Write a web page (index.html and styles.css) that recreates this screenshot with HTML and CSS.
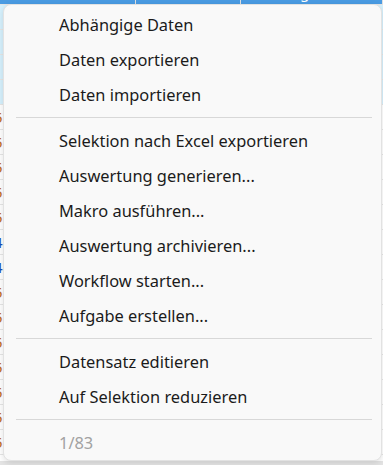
FILE: index.html
```html
<!DOCTYPE html>
<html lang="de">
<head>
    <meta charset="UTF-8">
    <meta name="viewport" content="width=device-width, initial-scale=1.0">
    <title>Kontextmenü</title>
    <link rel="stylesheet" href="styles.css">
</head>
<body>
    <div class="sheet">
        <div class="row selected">
            <div class="cell c1">3</div>
            <div class="cell c2">1000</div>
            <div class="cell c3">Monatsgehälter</div>
        </div>
        <div class="row marked"><div class="cell c1"></div></div>
        <div class="row marked"><div class="cell c1"></div></div>
        <div class="row marked"><div class="cell c1"></div></div>
        <div class="row marked"><div class="cell c1"></div></div>
        <div class="row"><div class="cell c1 num">5</div></div>
        <div class="row"><div class="cell c1 num">5</div></div>
        <div class="row"><div class="cell c1 num">5</div></div>
        <div class="row"><div class="cell c1 num">5</div></div>
        <div class="row"><div class="cell c1 num">5</div></div>
        <div class="row"><div class="cell c1 blue">4</div></div>
        <div class="row"><div class="cell c1 blue">4</div></div>
        <div class="row"><div class="cell c1 num">5</div></div>
        <div class="row"><div class="cell c1 num">5</div></div>
        <div class="row"><div class="cell c1 num">5</div></div>
        <div class="row"><div class="cell c1 num">5</div></div>
        <div class="row"><div class="cell c1 num">5</div></div>
        <div class="row"><div class="cell c1 num">5</div></div>
        <div class="row"><div class="cell c1 num">5</div></div>
    </div>

    <div class="menu">
        <div class="item">Abhängige Daten</div>
        <div class="item">Daten exportieren</div>
        <div class="item">Daten importieren</div>
        <div class="sep"></div>
        <div class="item">Selektion nach Excel exportieren</div>
        <div class="item">Auswertung generieren...</div>
        <div class="item">Makro ausführen...</div>
        <div class="item">Auswertung archivieren...</div>
        <div class="item">Workflow starten...</div>
        <div class="item">Aufgabe erstellen...</div>
        <div class="sep"></div>
        <div class="item">Datensatz editieren</div>
        <div class="item">Auf Selektion reduzieren</div>
        <div class="sep"></div>
        <div class="item disabled">1/83</div>
    </div>
</body>
</html>
```

FILE: styles.css
```css
body {
    margin: 0;
    width: 383px;
    height: 465px;
    overflow: hidden;
    background: #e4e4e4;
    font-family: "Noto Sans", "Open Sans", sans-serif;
}

.sheet {
    margin-top: -20px;
    background: #fff;
    height: 481px;
}
.row {
    display: flex;
    height: 24px;
    border-bottom: 1px solid #e6e6e6;
}
.row.selected {
    background: #4a9be2;
    color: #fff;
}
.row.marked {
    background: #d6f1fd;
}
.cell {
    font-size: 15px;
    line-height: 24px;
    padding-left: 6px;
    border-right: 1px solid #e0e0e0;
    white-space: nowrap;
    overflow: hidden;
}
.c1 {
    width: 135px;
    padding-left: 0;
    text-indent: -6px;
}
.c2 {
    width: 98px;
}
.c3 {
    flex: 1;
}
.num {
    color: #c06a1a;
}
.blue {
    color: #1c4fb8;
}

.menu {
    position: absolute;
    left: 3px;
    top: 4px;
    width: 377px;
    height: 453px;
    padding-top: 2px;
    background: #f9f9f9;
    border: 1px solid #e2e2e2;
    border-radius: 8px;
    box-shadow: 0 2px 6px rgba(0,0,0,0.12);
    box-sizing: content-box;
}
.item {
    height: 35px;
    line-height: 35px;
    padding-left: 55px;
    font-size: 16.4px;
    color: #1b1b1b;
    white-space: nowrap;
}
.item.disabled {
    color: #a2a2a2;
}
.sep {
    height: 1px;
    margin: 5px 9px 5px 12px;
    background: #d8d8d8;
}
```
